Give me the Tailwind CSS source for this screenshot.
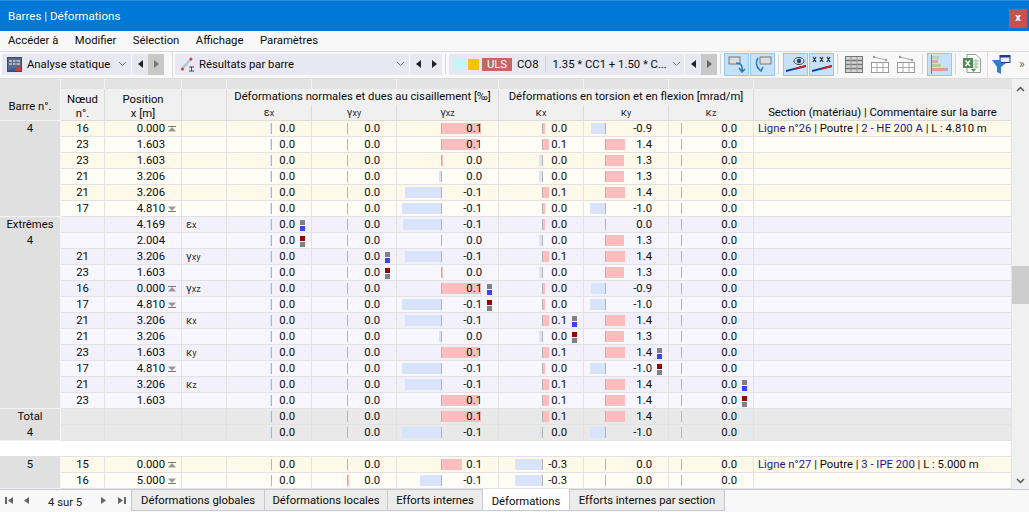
<!DOCTYPE html>
<html lang="fr">
<head>
<meta charset="UTF-8">
<title>Barres | Déformations</title>
<script src="https://cdn.jsdelivr.net/npm/@tailwindcss/browser@4"></script>
</head>
<body class="w-[1029px] h-[512px] overflow-hidden bg-[#f8f8f8] text-[11.3px] leading-[15px] text-[#0a0a0a] font-['Roboto',sans-serif]">
<div class="flex flex-col h-[512px]">

  <!-- Titre -->
  <header class="h-[31px] shrink-0 bg-[#0078d7] border-t border-[#2b8fe0] flex items-center justify-between pl-2 pr-[2px] text-white text-[11.6px]">
    <span>Barres | Déformations</span>
    <span class="w-[18px] h-[19px] mt-[5px] bg-[#c75050] flex items-center justify-center text-[11px] font-bold leading-none pb-[2px]">x</span>
  </header>

  <!-- Menu -->
  <nav class="h-[20px] shrink-0 flex items-center gap-[16.5px] pl-2 pb-[1px]">
    <span>Accéder à</span><span>Modifier</span><span>Sélection</span><span>Affichage</span><span>Paramètres</span>
  </nav>

  <!-- Barre d'outils -->
  <div class="h-[28px] shrink-0 border-t border-b border-[#dcdcdc] flex items-center pb-[2px] relative">
    <div class="ml-[2px] w-[129px] h-[21px] bg-[#e8e8f3] flex items-center pl-[5px] whitespace-nowrap">
      <svg class="shrink-0" width="15" height="15" viewBox="0 0 15 15"><rect x="0.5" y="0.5" width="14" height="14" fill="#5d6b85" stroke="#3b4a66"/><rect x="2" y="3" width="11" height="5" fill="#aab4c6"/><path d="M2 5.5h11M5.5 3v5M9 3v5" stroke="#5d6b85"/><path d="M1 13l13-4v5H1z" fill="#2a5bb0"/><path d="M8 11.5l6-2.5v5H8z" fill="#d23b3b"/></svg>
      <span class="ml-[5px]">Analyse statique</span>
      <svg class="ml-auto mr-[4px]" width="9" height="6" viewBox="0 0 9 6"><path d="M1 1l3.500 3.500L8 1" fill="none" stroke="#777"/></svg>
    </div>
    <div class="ml-[1px] w-[16px] h-[21px] bg-[#e8e8f3] flex items-center justify-center"><svg width="5" height="8"><path d="M5 0v8L0 4z" fill="#222"/></svg></div>
    <div class="w-[16px] h-[21px] bg-[#c8c8c8] flex items-center justify-center"><svg width="5" height="8"><path d="M0 0v8l5-4z" fill="#777"/></svg></div>
    <div class="ml-[8px] w-px h-[27px] bg-[#dcdcdc]"></div>
    <div class="ml-[2px] w-[234px] h-[21px] bg-[#e8e8f3] flex items-center pl-[5px]">
      <svg width="15" height="15" viewBox="0 0 15 15"><path d="M2 12L11 2" stroke="#b9c4d6" stroke-width="2.500"/><circle cx="2.500" cy="12" r="1.500" fill="#d23b3b"/><circle cx="11" cy="2" r="1.500" fill="#d23b3b"/><path d="M9 10h5M9 14h5M11.500 10v4" stroke="#444"/></svg>
      <span class="ml-[4px]">Résultats par barre</span>
      <svg class="ml-auto mr-[4px]" width="9" height="6" viewBox="0 0 9 6"><path d="M1 1l3.500 3.500L8 1" fill="none" stroke="#777"/></svg>
    </div>
    <div class="ml-[1px] w-[16px] h-[21px] bg-[#e8e8f3] flex items-center justify-center"><svg width="5" height="8"><path d="M5 0v8L0 4z" fill="#222"/></svg></div>
    <div class="w-[16px] h-[21px] bg-[#e8e8f3] flex items-center justify-center"><svg width="5" height="8"><path d="M0 0v8l5-4z" fill="#222"/></svg></div>
    <div class="ml-[3px] w-px h-[20px] bg-[#d4d4d4]"></div>
    <div class="ml-[3px] w-[235px] h-[21px] bg-[#e8e8f3] flex items-center pl-[5px]">
      <span class="w-[11px] h-[11px] bg-[#c6f6fb]"></span>
      <span class="ml-[3px] w-[11px] h-[11px] bg-[#f5c400]"></span>
      <span class="ml-[3px] w-[30px] h-[13px] bg-[#c86464] text-white flex items-center justify-center">ULS</span>
      <span class="ml-[5px]">CO8</span>
      <span class="ml-[7px] w-px h-[16px] bg-[#d4d4d4]"></span>
      <span class="ml-[6px] whitespace-nowrap">1.35 * CC1 + 1.50 * C...</span>
      <svg class="ml-auto mr-[3px]" width="9" height="6" viewBox="0 0 9 6"><path d="M1 1l3.500 3.500L8 1" fill="none" stroke="#777"/></svg>
    </div>
    <div class="ml-[1px] w-[16px] h-[21px] bg-[#e8e8f3] flex items-center justify-center"><svg width="5" height="8"><path d="M5 0v8L0 4z" fill="#222"/></svg></div>
    <div class="w-[16px] h-[21px] bg-[#c8c8c8] flex items-center justify-center"><svg width="5" height="8"><path d="M0 0v8l5-4z" fill="#666"/></svg></div>
    <div class="ml-[3px] w-px h-[20px] bg-[#d4d4d4]"></div>

    <div class="ml-[3px] w-[25px] h-[23px] bg-[#c5e2fa] border border-[#93c9f3] flex items-center justify-center">
      <svg width="20" height="19" viewBox="0 0 20 19"><rect x="2" y="2" width="11" height="7" fill="#ddd" stroke="#777"/><path d="M9 8c6 0 7 4 6 9M12 13l3 4 3-3" fill="none" stroke="#2a7ab8" stroke-width="1.500"/></svg>
    </div>
    <div class="ml-[1px] w-[25px] h-[23px] bg-[#c5e2fa] border border-[#93c9f3] flex items-center justify-center">
      <svg width="20" height="19" viewBox="0 0 20 19"><rect x="7" y="2" width="11" height="7" fill="#ddd" stroke="#777"/><path d="M5 3c-3 5-2 9 3 13M4 12l4 4 2-4" fill="none" stroke="#2a7ab8" stroke-width="1.500"/></svg>
    </div>
    <div class="ml-[3px] w-px h-[20px] bg-[#d4d4d4]"></div>
    <div class="ml-[4px] w-[25px] h-[23px] bg-[#c5e2fa] border border-[#93c9f3] flex items-center justify-center">
      <svg width="22" height="17" viewBox="0 0 22 17"><path d="M1 14L21 9v2L1 16z" fill="#1c3f94"/><path d="M11 11.500L21 9v2l-10 2.500z" fill="#d11f1f"/><ellipse cx="14" cy="5" rx="5" ry="3.500" fill="#ddd" stroke="#444"/><circle cx="14" cy="5" r="2.200" fill="#1c3f94"/></svg>
    </div>
    <div class="ml-[1px] w-[25px] h-[23px] bg-[#c5e2fa] border border-[#93c9f3] flex items-center justify-center">
      <svg width="22" height="17" viewBox="0 0 22 17"><path d="M1 14L21 9v2L1 16z" fill="#1c3f94"/><path d="M11 11.500L21 9v2l-10 2.500z" fill="#d11f1f"/><path d="M2 1l3 5M5 1L2 6M9 1l3 5M12 1L9 6M16 1l3 5M19 1l-3 5" stroke="#333" stroke-width="1.200"/></svg>
    </div>
    <div class="ml-[3px] w-px h-[20px] bg-[#d4d4d4]"></div>
    <svg class="ml-[7px]" width="18" height="17" viewBox="0 0 18 17"><rect x="0.500" y="0.500" width="17" height="16" fill="#d4d4d4" stroke="#777"/><path d="M0 4.500h18M0 8.500h18M0 12.500h18" stroke="#777" stroke-width="1.500"/><path d="M6 1v15M12 1v15" stroke="#999"/></svg>
    <svg class="ml-[8px]" width="18" height="18" viewBox="0 0 18 18"><rect x="0.500" y="7.500" width="17" height="10" fill="#fff" stroke="#999"/><path d="M0 12.500h18M6 8v10M12 8v10" stroke="#aaa"/><path d="M3 2l12 3" stroke="#aaa"/><circle cx="3" cy="2" r="1.200" fill="#999"/><circle cx="15" cy="5" r="1.200" fill="#999"/></svg>
    <svg class="ml-[8px]" width="18" height="18" viewBox="0 0 18 18"><rect x="0.500" y="7.500" width="17" height="10" fill="#fff" stroke="#999"/><path d="M0 12.500h18M6 8v10M12 8v10" stroke="#aaa"/><path d="M3 2l12 3" stroke="#aaa"/><circle cx="3" cy="2" r="1.200" fill="#999"/><circle cx="15" cy="5" r="1.200" fill="#999"/></svg>
    <div class="ml-[7px] w-px h-[20px] bg-[#d4d4d4]"></div>
    <div class="ml-[4px] w-[25px] h-[23px] bg-[#c5e2fa] border border-[#93c9f3] flex items-center justify-center">
      <svg width="19" height="19" viewBox="0 0 19 19"><path d="M1.500 0v19" stroke="#777"/><rect x="2" y="1" width="7" height="3" fill="#b7d7b0"/><rect x="2" y="5" width="6" height="3" fill="#e9a3a3"/><rect x="2" y="9" width="9" height="3" fill="#a8d49c"/><rect x="2" y="13" width="16" height="3" fill="#e29a9a"/></svg>
    </div>
    <div class="ml-[3px] w-px h-[20px] bg-[#d4d4d4]"></div>
    <svg class="ml-[7px]" width="18" height="20" viewBox="0 0 18 20"><path d="M4 .500h9l4.500 4.500v13.500H4z" fill="#fff" stroke="#999"/><rect x="0" y="4" width="10" height="10" fill="#4d8f52"/><path d="M2.500 6.500l4.500 5.500M7 6.500L2.500 12" stroke="#fff" stroke-width="1.300"/><path d="M10 7h6M10 10h6M10 13h6M13 5v10" stroke="#8fbc8f"/><path d="M8 15h5l-2.500 3z" fill="#4d8f52"/></svg>
    <div class="ml-[6px] w-px h-[27px] bg-[#dcdcdc]"></div>
    <svg class="ml-[4px]" width="19" height="19" viewBox="0 0 19 19"><rect x="8" y="0.500" width="10" height="7" fill="#eee" stroke="#1c3f7a"/><path d="M8 .500h10v2H8z" fill="#1c3f7a"/><path d="M0 5h9v3h5l-5 4v7l-4-2v-5z" fill="#2f7fc4"/></svg>
    <span class="ml-[8px] text-[#666] text-[12px]">»</span>
  </div>

  <!-- Tableau -->
  <div class="flex flex-1 min-h-0">
    <div class="w-[1011px]">
      <!-- En-tête -->
      <div class="grid h-[42px] grid-cols-[61px_44px_77px_45px_85px_85px_102px_85px_85px_85px_257px] grid-rows-[10px_16px_16px] bg-[#f0f0f0] text-center">
        <div class="bg-[#e3e3e3] border-r border-[#f4f4f4]"></div><div class="bg-[#e3e3e3] border-r border-[#f4f4f4]"></div><div class="bg-[#e3e3e3] border-r border-[#f4f4f4]"></div><div class="bg-[#e3e3e3] border-r border-[#f4f4f4]"></div><div class="bg-[#e3e3e3] border-r border-[#f4f4f4]"></div><div class="bg-[#e3e3e3] border-r border-[#f4f4f4]"></div><div class="bg-[#e3e3e3] border-r border-[#f4f4f4]"></div><div class="bg-[#e3e3e3] border-r border-[#f4f4f4]"></div><div class="bg-[#e3e3e3] border-r border-[#f4f4f4]"></div><div class="bg-[#e3e3e3] border-r border-[#f4f4f4]"></div><div class="bg-[#e3e3e3]"></div>
        <div class="row-span-2 bg-[#e3e3e3] border-r border-b border-[#f4f4f4] flex items-center justify-center pt-[3px]">Barre n°.</div>
        <div class="row-span-2 border-r border-b border-[#dcdcdc] leading-[14px] flex items-center justify-center pt-[4px]">Nœud<br>n°.</div>
        <div class="row-span-2 border-r border-b border-[#dcdcdc] leading-[14px] flex items-center justify-center pt-[4px]">Position<br>x [m]</div>
        <div class="row-span-2 border-r border-b border-[#dcdcdc]"></div>
        <div class="col-span-3 border-r border-[#dcdcdc] whitespace-nowrap">Déformations normales et dues au cisaillement [‰]</div>
        <div class="col-span-3 border-r border-[#dcdcdc] whitespace-nowrap">Déformations en torsion et en flexion [mrad/m]</div>
        <div class="row-span-2 border-b border-[#dcdcdc] flex items-end justify-center">Section (matériau) | Commentaire sur la barre</div>
        <div class="border-r border-b border-[#dcdcdc] text-[#333]">ε<span class="text-[9px]">x</span></div>
        <div class="border-r border-b border-[#dcdcdc] text-[#333]">γ<span class="text-[9px]">xy</span></div>
        <div class="border-r border-b border-[#dcdcdc] text-[#333]">γ<span class="text-[9px]">xz</span></div>
        <div class="border-r border-b border-[#dcdcdc] text-[#333]">κ<span class="text-[9px]">x</span></div>
        <div class="border-r border-b border-[#dcdcdc] text-[#333]">κ<span class="text-[9px]">y</span></div>
        <div class="border-r border-b border-[#dcdcdc] text-[#333]">κ<span class="text-[9px]">z</span></div>
      </div>
      <!-- Lignes -->
      <div id="rows"></div>
    </div>
    <!-- Ascenseur -->
    <div class="w-[18px] bg-[#f0f0f0] relative border-l border-[#e4e4e4]">
      <svg class="absolute left-[4px] top-[7px]" width="9" height="6" viewBox="0 0 9 6"><path d="M1 5l3.500-3.500L8 5" fill="none" stroke="#555" stroke-width="1.500"/></svg>
      <div class="absolute left-0 right-0 top-[187px] h-[38px] bg-[#cdcdcd]"></div>
      <svg class="absolute left-[4px] bottom-[5px]" width="9" height="6" viewBox="0 0 9 6"><path d="M1 1l3.500 3.500L8 1" fill="none" stroke="#555" stroke-width="1.500"/></svg>
    </div>
  </div>

  <!-- Onglets -->
  <div class="h-[23px] shrink-0 border-t border-[#c8c8d0] flex items-start relative">
    <div class="w-[131px] h-[22px] relative text-[#222]">
      <svg class="absolute left-[5px] top-[7px]" width="8" height="7"><path d="M0 0h2v7H0zM8 0v7L3 3.500z" fill="#666"/></svg>
      <svg class="absolute left-[23px] top-[7px]" width="6" height="7"><path d="M6 0v7L1 3.500z" fill="#666"/></svg>
      <span class="absolute left-[48px] top-[5px]">4 sur 5</span>
      <svg class="absolute left-[101px] top-[7px]" width="6" height="7"><path d="M0 0v7l5-3.500z" fill="#666"/></svg>
      <svg class="absolute left-[118px] top-[7px]" width="8" height="7"><path d="M0 0v7l5-3.500zM6 0h2v7H6z" fill="#666"/></svg>
    </div>
    <div class="w-[134px] h-[21px] bg-[#ececec] border-r border-b border-l border-[#c8c8d0] flex items-center justify-center">Déformations globales</div>
    <div class="w-[123px] h-[21px] bg-[#ececec] border-r border-b border-[#c8c8d0] flex items-center justify-center">Déformations locales</div>
    <div class="w-[95px] h-[21px] bg-[#ececec] border-r border-b border-[#c8c8d0] flex items-center justify-center">Efforts internes</div>
    <div class="w-[87px] h-[22px] -mt-px bg-white border-r border-b border-[#c8c8d0] flex items-center justify-center pt-[3px]">Déformations</div>
    <div class="w-[155px] h-[21px] bg-[#ececec] border-r border-b border-[#c8c8d0] flex items-center justify-center">Efforts internes par section</div>
  </div>
</div>

<script>
  // Colonnes : position de l'axe depuis le bord gauche de chaque colonne
  const axes = [44, 35, 44, 43, 21, 12];
  const sym = { ex: ['ε', 'x'], gxy: ['γ', 'xy'], gxz: ['γ', 'xz'], kx: ['κ', 'x'], ky: ['κ', 'y'], kz: ['κ', 'z'] };
  const Y1 = 'bg-[#fff9ea]', Y2 = 'bg-[#fffdf5]', L1 = 'bg-[#f2f1fb]', L2 = 'bg-[#f8f7ff]', T = 'bg-[#e9e9e9]';
  const C26 = ['Ligne n°26', 'Poutre', '2 - HE 200 A', 'L : 4.810 m'];
  const C27 = ['Ligne n°27', 'Poutre', '3 - IPE 200', 'L : 5.000 m'];

  // [barre, dernier du groupe, fond, noeud, position, repère, type, six cellules [valeur, barre, marqueur], commentaire]
  const e = -1, v = (x, w, m) => [x, w, m];
  const data = [
    ['4', 0, Y1, '16', '0.000', 'top', '', [v('0.0', e), v('0.0', 0), v('0.1', 40), v('0.0', 3), v('-0.9', -14), v('0.0', 0)], C26],
    ['', 0, Y2, '23', '1.603', '', '', [v('0.0', e), v('0.0', 0), v('0.1', 37), v('0.1', 7), v('1.4', 20), v('0.0', 0)]],
    ['', 0, Y1, '23', '1.603', '', '', [v('0.0', e), v('0.0', 0), v('0.0', 2), v('0.0', -3), v('1.3', 19), v('0.0', 0)]],
    ['', 0, Y2, '21', '3.206', '', '', [v('0.0', e), v('0.0', 0), v('0.0', -2), v('0.0', -3), v('1.3', 19), v('0.0', 0)]],
    ['', 0, Y1, '21', '3.206', '', '', [v('0.0', e), v('0.0', 0), v('-0.1', -36), v('0.1', 7), v('1.4', 20), v('0.0', 0)]],
    ['', 1, Y2, '17', '4.810', 'bot', '', [v('0.0', e), v('0.0', 0), v('-0.1', -39), v('0.0', 3), v('-1.0', -15), v('0.0', 0)]],
    ['Extrêmes', 0, L1, '', '4.169', '', 'ex', [v('0.0', e, 'max'), v('0.0', 0), v('-0.1', -38), v('0.0', 3), v('0.0', 0), v('0.0', 0)]],
    ['4', 0, L2, '', '2.004', '', '', [v('0.0', e, 'min'), v('0.0', 0), v('0.0', 0), v('0.0', -3), v('1.3', 19), v('0.0', 0)]],
    ['', 0, L1, '21', '3.206', '', 'gxy', [v('0.0', e), v('0.0', 0, 'max'), v('-0.1', -36), v('0.1', 7), v('1.4', 20), v('0.0', 0)]],
    ['', 0, L2, '23', '1.603', '', '', [v('0.0', e), v('0.0', 0, 'min'), v('0.0', 2), v('0.0', -3), v('1.3', 19), v('0.0', 0)]],
    ['', 0, L1, '16', '0.000', 'top', 'gxz', [v('0.0', e), v('0.0', 0), v('0.1', 40, 'max'), v('0.0', 3), v('-0.9', -14), v('0.0', 0)]],
    ['', 0, L2, '17', '4.810', 'bot', '', [v('0.0', e), v('0.0', 0), v('-0.1', -39, 'min'), v('0.0', 3), v('-1.0', -15), v('0.0', 0)]],
    ['', 0, L1, '21', '3.206', '', 'kx', [v('0.0', e), v('0.0', 0), v('-0.1', -36), v('0.1', 7, 'max'), v('1.4', 20), v('0.0', 0)]],
    ['', 0, L2, '21', '3.206', '', '', [v('0.0', e), v('0.0', 0), v('0.0', -2), v('0.0', -3, 'min'), v('1.3', 19), v('0.0', 0)]],
    ['', 0, L1, '23', '1.603', '', 'ky', [v('0.0', e), v('0.0', 0), v('0.1', 37), v('0.1', 7), v('1.4', 20, 'max'), v('0.0', 0)]],
    ['', 0, L2, '17', '4.810', 'bot', '', [v('0.0', e), v('0.0', 0), v('-0.1', -39), v('0.0', 3), v('-1.0', -15, 'min'), v('0.0', 0)]],
    ['', 0, L1, '21', '3.206', '', 'kz', [v('0.0', e), v('0.0', 0), v('-0.1', -36), v('0.1', 7), v('1.4', 20), v('0.0', 0, 'max')]],
    ['', 1, L2, '23', '1.603', '', '', [v('0.0', e), v('0.0', 0), v('0.1', 37), v('0.1', 7), v('1.4', 20), v('0.0', 0, 'min')]],
    ['Total', 0, T, '', '', '', '', [v('0.0', e), v('0.0', 0), v('0.1', 40), v('0.1', 7), v('1.4', 20), v('0.0', 0)]],
    ['4', 1, T, '', '', '', '', [v('0.0', e), v('0.0', 0), v('-0.1', -39), v('0.0', -3), v('-1.0', -15), v('0.0', 0)]],
    null,
    ['5', 0, Y1, '15', '0.000', 'top', '', [v('0.0', 0), v('0.0', 0), v('0.1', 21), v('-0.3', -27), v('0.0', 0), v('0.0', 0)], C27],
    ['', 1, Y2, '16', '5.000', 'bot', '', [v('0.0', 0), v('0.0', 2), v('-0.1', -21), v('-0.3', -27), v('0.0', 0), v('0.0', 0)]],
  ];

  const line = 'border-r border-b border-[#e2e2e2]';
  const marks = {
    top: '<svg class="absolute right-[5px] top-[5px]" width="8" height="6"><path d="M0 .5h8" stroke="#777"/><path d="M4 1L8 5.500H0z" fill="#999"/></svg>',
    bot: '<svg class="absolute right-[5px] top-[5px]" width="8" height="6"><path d="M0 5.500h8" stroke="#777"/><path d="M4 5L8 .500H0z" fill="#999"/></svg>',
  };

  function numCell(c, i) {
    const [val, w, m] = c;
    const a = axes[i];
    let bar = '';
    if (w > 0) bar = `<div class="absolute top-[2px] h-[11px] bg-[#ffbdbd]" style="left:${a}px;width:${w}px"></div>`;
    if (w < 0) bar = `<div class="absolute top-[2px] h-[11px] bg-[#d8e4fb]" style="left:${a + w}px;width:${-w}px"></div>`;
    let mk = '';
    if (m === 'max') mk = '<div class="absolute right-[6px] top-[3px] w-[5px] h-[11px] flex flex-col justify-between"><i class="block h-[5px] bg-[#808080]"></i><i class="block h-[5px] bg-[#4040ff]"></i></div>';
    if (m === 'min') mk = '<div class="absolute right-[6px] top-[3px] w-[5px] h-[11px] flex flex-col justify-between"><i class="block h-[5px] bg-[#a00000]"></i><i class="block h-[5px] bg-[#808080]"></i></div>';
    return `<div class="relative ${line} text-right pr-[16px]">${bar}<div class="absolute top-[2px] h-[11px] w-px bg-[#b4b4b4]" style="left:${a}px"></div><span class="relative">${val}</span>${mk}</div>`;
  }

  function comment(c) {
    if (!c) return '<div class="border-b border-[#e2e2e2]"></div>';
    return `<div class="border-b border-[#e2e2e2] pl-[4px] whitespace-nowrap"><span class="text-[#1a1a8c]">${c[0]}</span> | ${c[1]} | <span class="text-[#1a1a8c]">${c[2]}</span> | ${c[3]}</div>`;
  }

  document.getElementById('rows').innerHTML = data.map(r => {
    if (!r) return '<div class="h-[16px] bg-white border-b border-[#e2e2e2]"></div>';
    const [bar, end, bg, node, pos, mark, type, cells, com] = r;
    const t = type ? `<span class="text-[#333]">${sym[type][0]}<span class="text-[9px]">${sym[type][1]}</span></span>` : '';
    return `<div class="grid h-[16px] leading-[16px] grid-rows-[16px] grid-cols-[61px_44px_77px_45px_85px_85px_102px_85px_85px_85px_257px] ${bg}">`
      + `<div class="bg-[#e0e0e0] border-r border-r-[#f4f4f4] text-center leading-[15px] ${end ? 'border-b border-b-[#f4f4f4]' : ''}">${bar}</div>`
      + `<div class="${line} text-center">${node}</div>`
      + `<div class="relative ${line} text-right pr-[16px]">${pos}${mark ? marks[mark] : ''}</div>`
      + `<div class="${line} pl-[4px]">${t}</div>`
      + cells.map(numCell).join('')
      + comment(com)
      + '</div>';
  }).join('');
</script>
</body>
</html>
